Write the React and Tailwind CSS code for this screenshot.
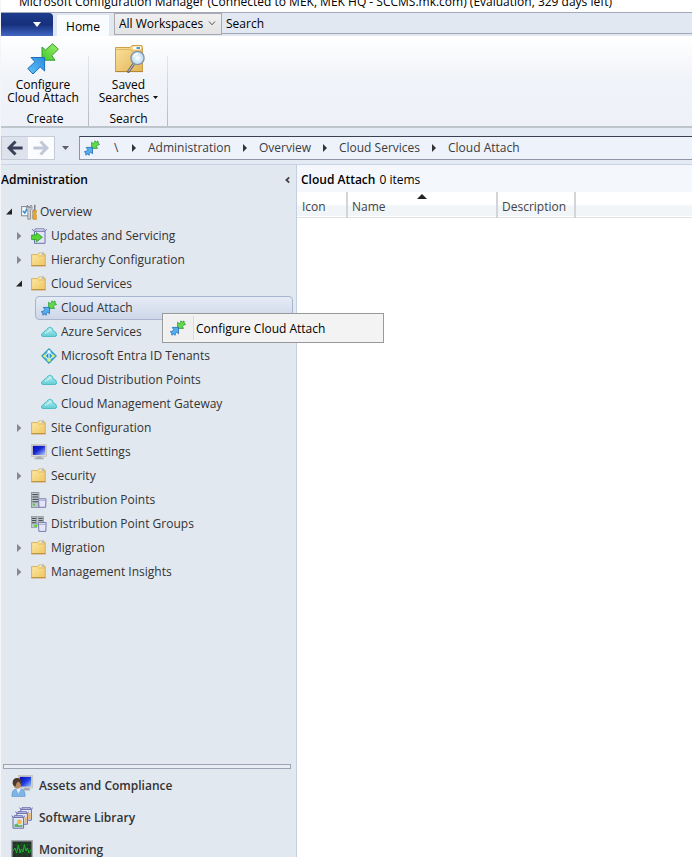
import { useState } from "react";

/* ---------- icons ---------- */

const SyncArrowsLarge = () => (
  <svg viewBox="0 0 32 32" className="h-8 w-8" aria-hidden="true">
    <defs>
      <linearGradient id="syncGreen" x1="1" y1="0" x2="0" y2="1">
        <stop offset="0" stopColor="#a4ee6a" />
        <stop offset="1" stopColor="#3fc92c" />
      </linearGradient>
      <linearGradient id="syncBlue" x1="1" y1="0" x2="0" y2="1">
        <stop offset="0" stopColor="#2a8be0" />
        <stop offset="1" stopColor="#5fc4f7" />
      </linearGradient>
    </defs>
    <path
      d="M15 4 L18.5 7 L25.5 .8 L31.4 6.2 L24.8 12.6 L28 17.2 L15 17.2 Z"
      fill="url(#syncGreen)"
      stroke="#2f9e35"
      strokeLinejoin="round"
    />
    <path
      d="M4 14.5 L17.6 14.5 L17.6 28 L13.2 24 L6 31 L.8 25.6 L8 18.8 Z"
      fill="url(#syncBlue)"
      stroke="#1f6fb8"
      strokeLinejoin="round"
    />
  </svg>
);

const SyncArrows = () => (
  <svg viewBox="0 0 16 16" className="h-4 w-4" aria-hidden="true">
    <path
      d="M7.6 2.2 L9.2 3.6 L10.6 2.4 L10.8 .9 L12.6 2 L14 .9 L14.2 2.8 L15.5 4.6 L13.8 5 L12.4 6.4 L13.6 8.4 L7.6 8.4 Z"
      fill="#62d84a"
      stroke="#2d9a35"
      strokeWidth=".8"
      strokeLinejoin="round"
    />
    <path
      d="M2.2 7.4 L8.5 7.4 L8.5 13.8 L6.8 12.2 L5.4 13.4 L5.2 15.2 L3.4 14 L1.9 15.2 L1.7 13.4 L.5 11.6 L2.2 11.2 L3.8 9.6 Z"
      fill="#55aef0"
      stroke="#1f6cb6"
      strokeWidth=".8"
      strokeLinejoin="round"
    />
  </svg>
);

const FolderIcon = () => (
  <svg viewBox="0 0 16 16" className="h-4 w-4" aria-hidden="true">
    <defs>
      <linearGradient id="folderFill" x1="0" y1="0" x2="1" y2="1">
        <stop offset="0" stopColor="#fdeaa8" />
        <stop offset="1" stopColor="#f0c660" />
      </linearGradient>
    </defs>
    <path
      d="M.6 2.6 H6.5 L8 1 H13 V2.6 H14.2 V13.6 H.6 Z"
      fill="url(#folderFill)"
      stroke="#cfa04a"
      strokeWidth=".8"
    />
    <path d="M8.4 2 H12.2" stroke="#fff" />
    <path d="M10.6 2 H12.2" stroke="#5b9bd0" />
    <path d="M7 4 H14" stroke="#dcb25c" strokeWidth=".7" />
    <path d="M.4 13.8 H14.6" stroke="#b98732" />
  </svg>
);

const SavedSearchIcon = () => (
  <svg viewBox="0 0 32 32" className="h-8 w-8" aria-hidden="true">
    <defs>
      <linearGradient id="bigFolder" x1="0" y1="0" x2="1" y2="1">
        <stop offset="0" stopColor="#fbe3a0" />
        <stop offset="1" stopColor="#e3b455" />
      </linearGradient>
      <radialGradient id="lens">
        <stop offset="0" stopColor="#ffffff" />
        <stop offset="1" stopColor="#b5d8f2" />
      </radialGradient>
    </defs>
    <path
      d="M2.5 4.5 H17 L19 2.5 H28 Q29.5 2.5 29.5 4.5 V28.5 H2.5 Z"
      fill="url(#bigFolder)"
      stroke="#cf9f48"
    />
    <path d="M3 6.5 H17 L19 8 H29" fill="none" stroke="#dcae55" strokeWidth=".8" />
    <rect x="20" y="3.5" width="8" height="3" rx="1" fill="#fff" />
    <rect x="23.5" y="4" width="3.5" height="2" fill="#4b9ad6" />
    <path d="M2.5 28.6 H30" stroke="#b48431" />
    <path d="M21 20.5 L15.5 28.5" stroke="#6a6a6a" strokeWidth="3" strokeLinecap="round" />
    <path d="M20.8 20.7 L15.8 28" stroke="#c9c9c9" strokeWidth="1" strokeLinecap="round" />
    <circle cx="24.5" cy="15" r="6.6" fill="url(#lens)" stroke="#8795a3" strokeWidth="1.4" />
    <path d="M20.5 14 Q21.5 10.8 25 10.6" fill="none" stroke="#fff" strokeWidth="1.2" />
  </svg>
);

const OverviewIcon = () => (
  <svg viewBox="0 0 16 16" className="h-4 w-4" aria-hidden="true">
    <rect x=".6" y="2.6" width="7.6" height="9.2" fill="#f3f8fd" stroke="#7b8796" />
    <path d="M2 7 L3.8 9 L6 5" fill="none" stroke="#2f8ed8" strokeWidth="1.6" />
    <path
      d="M6.6 1 L5.4 2.4 V4.6 L6.8 6 V15.2 H9.6 V6 L11 4.6 V2.4 L9.8 1 V3.8 H6.8 Z"
      fill="#cfd0d2"
      stroke="#727578"
      strokeWidth=".7"
    />
    <path d="M11.6 15 V7 L12.4 5" fill="none" stroke="#a4a6a8" />
    <path d="M13.8 .8 V7" stroke="#77797c" strokeWidth="1.4" />
    <path
      d="M12.2 6.6 H15.4 V8.6 L14.7 9.8 L15.4 11 V15.4 H12.2 V11 L12.9 9.8 L12.2 8.6 Z"
      fill="#f2aa1c"
      stroke="#c07d0c"
      strokeWidth=".5"
    />
  </svg>
);

const UpdatesIcon = () => (
  <svg viewBox="0 0 16 16" className="h-4 w-4" aria-hidden="true">
    <path d="M3.5 3.4 H14 V15.3 H3.5 Z" fill="#e2e5f5" stroke="#6d6fa8" />
    <path d="M3.4 3.4 L.9 1.2 M14 3.4 L15.6 1.2" stroke="#6d6fa8" />
    <path d="M4 .7 H13.2 V3.4 H4 Z" fill="#c9cce8" stroke="#7d7fb4" strokeWidth=".8" />
    <path
      d="M.6 7 H5.4 V4.6 L11.4 9.3 L5.4 14 V11.6 H.6 Z"
      fill="#58d636"
      stroke="#249a2c"
      strokeWidth=".8"
    />
  </svg>
);

const CloudIcon = () => (
  <svg viewBox="0 0 16 16" className="h-4 w-4" aria-hidden="true">
    <defs>
      <linearGradient id="cloudFill" x1="0" y1="0" x2="0" y2="1">
        <stop offset="0" stopColor="#b9eef0" />
        <stop offset="1" stopColor="#62cdd4" />
      </linearGradient>
    </defs>
    <path
      d="M2 12.5 Q.5 12.5 .5 11 Q.5 9 2.8 8.6 Q3.2 6.4 5.2 6.6 Q6.4 3.2 9.2 3.3 Q12 3.6 12.2 7 Q15.6 7.6 15.6 10.8 Q15.6 12.5 14 12.5 Z"
      fill="url(#cloudFill)"
      stroke="#45b8c1"
      strokeWidth=".9"
    />
    <path d="M4 9.6 Q5.5 7.6 7 8 Q8.3 5.2 10.4 6.2" fill="none" stroke="#e9fdfd" strokeWidth=".8" />
  </svg>
);

const EntraIcon = () => (
  <svg viewBox="0 0 16 16" className="h-4 w-4" aria-hidden="true">
    <path
      d="M8 .6 L15.4 8 L8 15.4 L.6 8 Z"
      fill="#41b2d8"
      stroke="#2288ac"
      strokeLinejoin="round"
    />
    <path d="M8 3.4 L4 8 L8 12.2 L12 8 Z" fill="#1f8fd0" stroke="#d9f5fb" strokeWidth="1.1" />
    <path d="M8 3.4 V12" stroke="#e6f8ff" strokeWidth="1.2" />
    <circle cx="8" cy="3.6" r="1.4" fill="#fff" />
    <circle cx="3.8" cy="8" r="1.5" fill="#e2ef6a" />
    <circle cx="12.2" cy="8" r="1.5" fill="#e2ef6a" />
    <circle cx="8" cy="12.2" r="1.6" fill="#e2ef6a" />
  </svg>
);

const MonitorIcon = () => (
  <svg viewBox="0 0 16 16" className="h-4 w-4" aria-hidden="true">
    <defs>
      <linearGradient id="screenFill" x1="0" y1="0" x2="1" y2="1">
        <stop offset="0" stopColor="#0a0ac0" />
        <stop offset=".45" stopColor="#1526cf" />
        <stop offset="1" stopColor="#b9d2fb" />
      </linearGradient>
    </defs>
    <rect x=".5" y=".7" width="15" height="11.6" fill="#dcd9cd" stroke="#b9b6aa" strokeWidth=".6" />
    <rect x="1.8" y="1.8" width="12.4" height="9.2" fill="url(#screenFill)" />
    <path d="M6 12.4 H10 V13.6 H12.6 V15.2 H3.6 V13.6 H6 Z" fill="#a9aab0" />
  </svg>
);

const ServerIcon = () => (
  <svg viewBox="0 0 16 16" className="h-4 w-4" aria-hidden="true">
    <rect x=".5" y=".6" width="7.4" height="14.8" fill="#bcc5c9" stroke="#7d888e" strokeWidth=".8" />
    <path d="M1.4 2.6 H7 M1.4 5 H7 M1.4 7.4 H7 M1.4 9.8 H7" stroke="#3d484e" />
    <rect x="2" y="11.6" width="2" height="2" fill="#4fc83c" />
    <path d="M7.6 6.8 H15 L14.6 15.3 H8 Z" fill="#e4e6f8" stroke="#7779b0" />
    <path d="M7.6 8.4 H15" stroke="#9fa1cf" strokeWidth=".8" />
  </svg>
);

const ServerGroupIcon = () => (
  <svg viewBox="0 0 16 16" className="h-4 w-4" aria-hidden="true">
    <rect x=".4" y=".5" width="5.4" height="11" fill="#bcc5c9" stroke="#89949a" strokeWidth=".7" />
    <rect x="7" y=".5" width="5.4" height="9" fill="#bcc5c9" stroke="#89949a" strokeWidth=".7" />
    <path d="M1 2.4 H5.2 M1 4.6 H5.2 M7.6 2.4 H11.8 M7.6 4.6 H11.8 M1 6.8 H5.2" stroke="#3d484e" />
    <rect x="3.4" y="8.6" width="2.6" height="2.4" fill="#56dc2c" />
    <path d="M7.4 6.6 H15.2 L14.8 15.4 H7.9 Z" fill="#e4e6f8" stroke="#7779b0" />
    <path d="M7.6 8.4 H15" stroke="#9fa1cf" strokeWidth=".8" />
  </svg>
);

const AssetsIcon = () => (
  <svg viewBox="0 0 22 22" className="h-[22px] w-[22px]" aria-hidden="true">
    <defs>
      <linearGradient id="assetScreen" x1="0" y1="0" x2="1" y2="1">
        <stop offset="0" stopColor="#0707b5" />
        <stop offset=".5" stopColor="#1c3be0" />
        <stop offset="1" stopColor="#9fc4fb" />
      </linearGradient>
    </defs>
    <rect x="7.4" y=".6" width="14" height="12.4" fill="#dcd9cd" stroke="#b9b6aa" strokeWidth=".6" />
    <rect x="8.8" y="1.8" width="11.4" height="9.8" fill="url(#assetScreen)" />
    <path d="M13 13 H18 L19.4 15.6 H12 Z" fill="#a5a7ae" />
    <path
      d="M1 21.6 Q.6 14.8 4.4 14.2 H10.4 Q14.4 14.8 14 21.6 Z"
      fill="#7fb5e6"
      stroke="#4f8cc4"
      strokeWidth=".6"
    />
    <path d="M5.4 13.8 L7.4 18.4 L9.8 13.8 Z" fill="#e8f2fb" />
    <ellipse cx="6.2" cy="8.8" rx="4" ry="5" fill="#b88a5e" />
    <path
      d="M1.6 8.6 Q1.4 3 6.2 3.1 Q10.6 3.2 10.4 7 L9.8 10 Q9 7 7 6.6 Q5.4 7.6 4.4 11.4 Q2 11 1.6 8.6 Z"
      fill="#4c382a"
    />
  </svg>
);

const LibraryBox = ({ x, y }) => (
  <g transform={`translate(${x} ${y})`}>
    <path d="M1.2 2.4 H11.8 V13.2 H1.2 Z" fill="#e6e8f8" stroke="#6668a8" />
    <path d="M1.2 2.4 L0 .6 M11.8 2.4 L13 .6" stroke="#6668a8" />
    <path d="M2.4 .6 H10.8 V2.4 H2.4 Z" fill="#c4c6e6" stroke="#6668a8" strokeWidth=".8" />
  </g>
);

const LibraryIcon = () => (
  <svg viewBox="0 0 22 22" className="h-[22px] w-[22px]" aria-hidden="true">
    <LibraryBox x={8.6} y={0} />
    <path d="M18.4 6 V12" stroke="#f2b25a" strokeWidth="2.4" />
    <LibraryBox x={4.6} y={4} />
    <path d="M14.6 10 V16" stroke="#f2b25a" strokeWidth="2" />
    <LibraryBox x={0.8} y={8} />
    <rect x="3.4" y="12" width="8" height="8" fill="#cfe8f6" />
    <circle cx="8.4" cy="15" r="2.4" fill="#f4b64c" />
    <path d="M3.4 20 V17.4 L6 16.6 L8 18.6 L11.4 17.8 V20 Z" fill="#62b068" />
  </svg>
);

const MonitoringIcon = () => (
  <svg viewBox="0 0 22 22" className="h-[22px] w-[22px]" aria-hidden="true">
    <rect x=".8" y="1.8" width="20.4" height="17" fill="#26302a" stroke="#a3a8ab" strokeWidth="1.4" />
    <path
      d="M2 6 H20 M2 10 H20 M2 14 H20 M6 3 V18 M11 3 V18 M16 3 V18"
      stroke="#145c1e"
      strokeWidth=".7"
    />
    <path
      d="M2 12 L4 9 L5.6 14 L7.4 6 L9 14 L10.4 10 L12 13 L13.4 5.6 L15 12 L16.4 9 L18 14 L20 11"
      fill="none"
      stroke="#17b531"
    />
  </svg>
);

const ArrowIcon = ({ color, flip }) => (
  <svg viewBox="0 0 16 16" className={flip ? "h-4 w-4 rotate-180" : "h-4 w-4"} aria-hidden="true">
    <path d="M8.5 1.5 L2 8 L8.5 14.5 M2.4 8 H15.6" fill="none" stroke={color} strokeWidth="3" />
  </svg>
);

const Expander = ({ open }) => (
  <svg viewBox="0 0 8 8" className="h-2 w-2" aria-hidden="true">
    {open ? <path d="M7 .5 V6.5 H1 Z" fill="#222" /> : <path d="M2 0 L6.4 4 L2 8 Z" fill="#85898f" />}
  </svg>
);

/* ---------- data ---------- */

const treeItems = [
  { label: "Updates and Servicing", icon: UpdatesIcon, open: false },
  { label: "Hierarchy Configuration", icon: FolderIcon, open: false },
  {
    label: "Cloud Services",
    icon: FolderIcon,
    open: true,
    children: [
      { label: "Cloud Attach", icon: SyncArrows },
      { label: "Azure Services", icon: CloudIcon },
      { label: "Microsoft Entra ID Tenants", icon: EntraIcon },
      { label: "Cloud Distribution Points", icon: CloudIcon },
      { label: "Cloud Management Gateway", icon: CloudIcon },
    ],
  },
  { label: "Site Configuration", icon: FolderIcon, open: false },
  { label: "Client Settings", icon: MonitorIcon },
  { label: "Security", icon: FolderIcon, open: false },
  { label: "Distribution Points", icon: ServerIcon },
  { label: "Distribution Point Groups", icon: ServerGroupIcon },
  { label: "Migration", icon: FolderIcon, open: false },
  { label: "Management Insights", icon: FolderIcon, open: false },
];

const workspaces = [
  { label: "Assets and Compliance", icon: AssetsIcon },
  { label: "Software Library", icon: LibraryIcon },
  { label: "Monitoring", icon: MonitoringIcon },
];

const crumbs = ["Administration", "Overview", "Cloud Services", "Cloud Attach"];

/* ---------- layout ---------- */

const TabRow = () => (
  <div className="flex h-6 border-t border-[#a3a9b8] bg-[#e2e8f1]">
    <button
      type="button"
      aria-label="Application menu"
      className="flex w-[52px] items-center justify-end rounded-tr-sm bg-linear-to-b from-[#1c3c8c] via-[#16307c] to-[#4367c4] pr-3"
    >
      <svg viewBox="0 0 8 5" className="h-[5px] w-2" aria-hidden="true">
        <path d="M0 0 H8 L4 5 Z" fill="#fff" />
      </svg>
    </button>
    <button type="button" className="ml-1 mt-0.5 w-[52px] bg-[#f9fbfe] pt-0.5 text-black">
      Home
    </button>
    <div className="relative ml-[5px] w-[108px]">
      <select
        aria-label="Workspace"
        className="h-[22px] w-full appearance-none border border-[#a9abb0] bg-linear-to-b from-[#f0f0f0] to-[#e3e3e3] pl-1 text-black"
      >
        <option>All Workspaces</option>
      </select>
      <svg
        viewBox="0 0 8 5"
        className="pointer-events-none absolute right-[6px] top-2 h-[5px] w-2"
        aria-hidden="true"
      >
        <path d="M1 .5 L4 3.8 L7 .5" fill="none" stroke="#555" />
      </svg>
    </div>
    <input
      type="text"
      aria-label="Search"
      placeholder="Search"
      className="h-[21px] min-w-0 flex-1 border-b border-[#a3a9b8] bg-[#e2e8f1] pl-1 text-black placeholder:text-black"
    />
  </div>
);

const RibbonGroup = ({ title, width, children }) => (
  <section className={`relative flex flex-col items-center ${width}`}>
    {children}
    <h2 className="mt-auto pb-px leading-3">{title}</h2>
    <div className="absolute right-0 top-5 bottom-0 w-px bg-linear-to-b from-[#e4e8ee] to-[#b4b9c4]" />
  </section>
);

const Ribbon = () => (
  <div className="flex h-[92px] border-b-2 border-[#bfc5cc] bg-linear-to-b from-white via-[#f0f3f8] to-[#eef1f7] text-black">
    <RibbonGroup title="Create" width="w-[88px]">
      <button type="button" className="mr-1 mt-[7px] flex flex-col items-center leading-[13px]">
        <SyncArrowsLarge />
        <span className="mt-[3px]">Configure</span>
        <span>Cloud Attach</span>
      </button>
    </RibbonGroup>
    <RibbonGroup title="Search" width="w-[79px]">
      <button type="button" className="mt-[7px] flex flex-col items-center leading-[13px]">
        <SavedSearchIcon />
        <span className="mt-[3px]">Saved</span>
        <span className="flex items-center gap-1">
          Searches
          <svg viewBox="0 0 5 3" className="h-[3px] w-[5px]" aria-hidden="true">
            <path d="M0 0 H5 L2.5 3 Z" fill="#111" />
          </svg>
        </span>
      </button>
    </RibbonGroup>
  </div>
);

const AddressBar = () => (
  <div className="flex h-[37px] items-center border-b border-[#c9d3e3] bg-[#e5ebf5]">
    <div className="mt-1 flex h-6 border border-[#c3cad8]">
      <button type="button" aria-label="Back" className="flex w-[26px] items-center justify-center bg-[#dde2ec]">
        <ArrowIcon color="#3a4058" />
      </button>
      <button
        type="button"
        aria-label="Forward"
        className="flex w-[26px] items-center justify-center bg-[#fbfcfe]"
      >
        <ArrowIcon color="#c0c8d8" flip />
      </button>
    </div>
    <button type="button" aria-label="Recent locations" className="mt-1 flex w-6 justify-center pr-1">
      <svg viewBox="0 0 7 4" className="h-1 w-[7px]" aria-hidden="true">
        <path d="M0 0 H7 L3.5 4 Z" fill="#5c6068" />
      </svg>
    </button>
    <nav
      aria-label="Location"
      className="mt-1 flex h-6 min-w-0 flex-1 items-center whitespace-nowrap border border-r-0 border-[#8e95a5] border-t-[#3c4152] bg-[#edf2fb] pl-1 text-[#3c3c3c]"
    >
      <SyncArrows />
      <a href="#root" className="ml-3.5 w-1.5">
        {"\\"}
      </a>
      {crumbs.map((crumb) => (
        <span key={crumb} className="flex items-center">
          <svg viewBox="0 0 4 8" className="mx-3 h-2 w-1" aria-hidden="true">
            <path d="M0 0 L4 4 L0 8 Z" fill="#333" />
          </svg>
          <a href="#crumb">{crumb}</a>
        </span>
      ))}
    </nav>
  </div>
);

const TreeRow = ({ item, selected, onSelect, nested }) => {
  const Icon = item.icon;

  return (
    <button
      type="button"
      onClick={() => onSelect(item.label)}
      className={
        selected
          ? "flex h-6 w-full items-center gap-1 rounded-sm border border-[#a9b5cf] bg-linear-to-b from-[#e6ecf6] to-[#cdd7e8] pl-[5px] text-left"
          : nested
            ? "flex h-6 w-full items-center gap-1 pl-1.5 text-left"
            : "flex h-6 w-full items-center text-left"
      }
    >
      {!nested && (
        <span className="flex w-4 shrink-0">{item.open !== undefined && <Expander open={item.open} />}</span>
      )}
      <Icon />
      <span className={nested ? "" : "ml-1"}>{item.label}</span>
    </button>
  );
};

const Sidebar = ({ selected, onSelect }) => (
  <aside className="flex w-[296px] shrink-0 flex-col border-r border-[#c5cfe0] bg-[#e2e8f0] text-[#333]">
    <div className="flex h-[30px] items-center justify-between pr-1.5 text-black">
      <h2 className="font-semibold">Administration</h2>
      <button type="button" aria-label="Collapse pane">
        <svg viewBox="0 0 5 8" className="h-2 w-[5px]" aria-hidden="true">
          <path d="M4.2 1.4 L1.4 4 L4.2 6.6" fill="none" stroke="#444" strokeWidth="1.8" />
        </svg>
      </button>
    </div>

    <div className="flex-1 pl-1 pr-[3px] pt-[5px]">
      <button type="button" className="flex h-6 items-center">
        <span className="w-4">
          <Expander open />
        </span>
        <OverviewIcon />
        <span className="ml-[3px]">Overview</span>
      </button>
      <ul className="pl-2.5">
        {treeItems.map((item) => (
          <li key={item.label}>
            <TreeRow item={item} onSelect={onSelect} />
            {item.children && (
              <ul className="pl-5">
                {item.children.map((child) => (
                  <li key={child.label}>
                    <TreeRow item={child} selected={selected === child.label} onSelect={onSelect} nested />
                  </li>
                ))}
              </ul>
            )}
          </li>
        ))}
      </ul>
    </div>

    <div className="ml-0.5 mr-[5px] h-[5px] border border-[#9ca3b3] bg-[#e8ecf3]" />
    <nav aria-label="Workspaces" className="-mb-[9px] pt-px font-semibold">
      {workspaces.map(({ label, icon: Icon }) => (
        <button key={label} type="button" className="flex h-8 w-full items-center gap-1.5 pl-2.5">
          <Icon />
          {label}
        </button>
      ))}
    </nav>
  </aside>
);

const ResultsPane = () => (
  <main className="min-w-0 flex-1 bg-white">
    <h1 className="flex h-[27px] items-center gap-1 bg-[#f4f7fc] pl-1 pt-0.5 text-black">
      <span className="font-semibold">Cloud Attach</span> 0 items
    </h1>
    <table className="w-full table-fixed border-collapse text-left text-[#444]">
      <thead>
        <tr className="h-[25px] border-b border-[#e0e3e6] bg-linear-to-b from-white from-50% to-[#f1f5f8] to-60%">
          <th className="w-[50px] border-r-2 border-[#d3d5d8] pl-[5px] pt-1.5 font-normal">Icon</th>
          <th
            className="relative w-[150px] border-r-2 border-[#d3d5d8] pl-1 pt-1.5 font-normal"
            aria-sort="ascending"
          >
            Name
            <svg
              viewBox="0 0 10 5"
              className="absolute left-1/2 top-0.5 h-[5px] w-2.5 -translate-x-1/2"
              aria-hidden="true"
            >
              <path d="M0 5 L5 0 L10 5 Z" fill="#222" />
            </svg>
          </th>
          <th className="w-[78px] border-r-2 border-[#d3d5d8] pl-1 pt-1.5 font-normal">Description</th>
          <th aria-hidden="true" />
        </tr>
      </thead>
      <tbody />
    </table>
  </main>
);

const ContextMenu = () => (
  <div
    role="menu"
    className="absolute left-[161px] top-[148px] w-[222px] border border-[#999] bg-[#f3f3f3] p-0.5 text-black"
  >
    <button type="button" role="menuitem" className="flex h-6 w-full items-center">
      <span className="flex h-full w-[29px] items-center border-r border-[#dcdcdc] bg-[#f0f0f0] pl-[5px]">
        <SyncArrows />
      </span>
      <span className="ml-0.5 pt-0.5">Configure Cloud Attach</span>
    </button>
  </div>
);

const App = () => {
  const [selected, setSelected] = useState("Cloud Attach");

  return (
    <div className="flex h-screen flex-col overflow-hidden border-l border-[#f3f5f8] bg-white font-['Open_Sans','Noto_Sans',sans-serif] text-[12px] leading-4">
      <header className="flex h-3 shrink-0 items-end overflow-hidden whitespace-nowrap pb-0.5 pl-[18px] text-black">
        Microsoft Configuration Manager (Connected to MEK, MEK HQ - SCCMS.mk.com) (Evaluation, 329 days left)
      </header>
      <TabRow />
      <Ribbon />
      <AddressBar />
      <div className="relative flex min-h-0 flex-1">
        <Sidebar selected={selected} onSelect={setSelected} />
        <ResultsPane />
        <ContextMenu />
      </div>
    </div>
  );
};

export default App;
